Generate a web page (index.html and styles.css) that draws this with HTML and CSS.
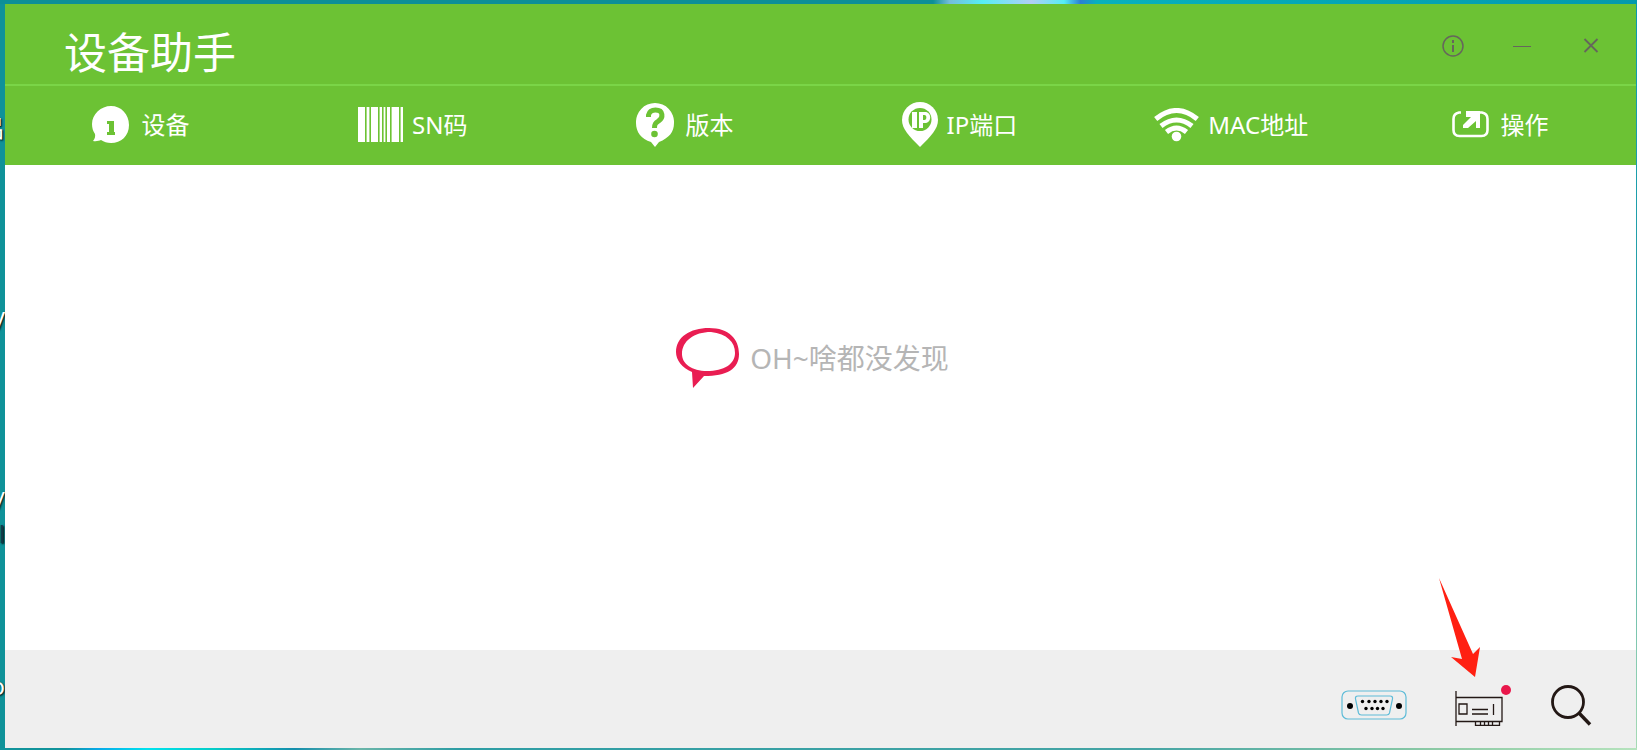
FILE: index.html
```
<!DOCTYPE html>
<html lang="zh-CN">
<head>
<meta charset="utf-8">
<title>设备助手</title>
<link rel="stylesheet" href="styles.css">
</head>
<body>
<div class="desktop">
  <div class="desk-labels" aria-hidden="true">
    <span class="desk-label label-a">吕</span>
    <span class="desk-label label-b">y</span>
    <span class="desk-label label-c">/</span>
    <span class="desk-label label-d">l</span>
    <span class="desk-label label-e">o</span>
  </div>
  <main class="window">
    <header class="titlebar">
      <h1 class="title">设备助手</h1>
      <div class="controls">
        <button class="control" aria-label="关于"><svg width="22" height="22" viewBox="0 0 22 22" fill="none" stroke="#66665c" stroke-width="1.5"><circle cx="11" cy="11" r="10"/><path d="M11 5v3M11 10v7" stroke-width="2"/></svg></button>
        <button class="control" aria-label="最小化"><svg width="22" height="22" viewBox="0 0 22 22"><path d="M2 11h18v1H2z" fill="#66665c"/></svg></button>
        <button class="control" aria-label="关闭"><svg width="22" height="22" viewBox="0 0 22 22"><path d="M4.500 4l13 13M17.500 4l-13 13" stroke="#66665c" stroke-width="1.800"/></svg></button>
      </div>
    </header>
    <div class="columns">
      <div class="column wide"><svg width="37" height="38" viewBox="0 0 37 38"><path fill="#fff" d="M19 0C29 0 37 8 37 19S29 37 19 37c-4 0-7-1-10-3-2 1-5 1.500-8 1 2-2 2.500-5 2-7C1 25 0 22 0 18 0 8 9 0 19 0z"/><path fill="#6cc234" d="M15 15h7v11h1v3h-8v-3h2v-8h-2z"/></svg><span>设备</span></div>
      <div class="column narrow"><svg width="45" height="35" viewBox="0 0 45 35"><path fill="#fff" d="M0 0h45v35H0z"/><path stroke="#6cc234" stroke-width="1" d="M7.500 0v35M12.500 0v35M20.500 0v35M24.500 0v35M28.500 0v35M32.500 0v35M41.500 0v35"/><path stroke="#a6da83" stroke-width="1" d="M8.500 0v35M11.500 0v35M21.500 0v35M25.500 0v35M27.500 0v35M33.500 0v35M42.500 0v35"/></svg><span>SN码</span></div>
      <div class="column wide"><svg width="38" height="44" viewBox="0 0 38 44"><path fill="#fff" d="M19 0a19 19 0 0 1 19 20c0 9-5 15-15 19l-4 5-4-5C5 36 0 29 0 20A19 19 0 0 1 19 0z"/><path d="M12.500 14V12c1-4 4-5 7-5 8 0 8 8 3 11-3 2-4 3-4 7" fill="none" stroke="#6cc234" stroke-width="5"/><circle cx="18.500" cy="31" r="3.300" fill="#6cc234"/></svg><span>版本</span></div>
      <div class="column narrow late"><svg width="36" height="45" viewBox="0 0 36 45"><path fill="#fff" d="M18 0a18 18 0 0 1 18 18c0 9-7 16-18 27C7 34 0 27 0 18A18 18 0 0 1 18 0z"/><circle cx="18" cy="17.500" r="11.500" fill="#6cc234"/><path fill="#fff" fill-rule="evenodd" d="M10 10h5v16h-5zM17 10h6c7 0 7 11 0 11h-2v5h-4zM21 13v5h1.500c2.500 0 2.500-5 0-5z"/></svg><span>IP端口</span></div>
      <div class="column narrow late"><svg width="45" height="34" viewBox="0 0 45 34" fill="none" stroke="#fff" stroke-width="5"><path d="M1.700 11q21-17 41.600 0M7 18q15.500-12 31 0M12.500 24q10-8 20 0"/><circle cx="22.500" cy="28.500" r="4.800" fill="#fff" stroke="none"/></svg><span>MAC地址</span></div>
      <div class="column wide"><svg width="37" height="27" viewBox="0 0 37 27" fill="none" stroke="#fff" stroke-width="2.600"><path d="M9 1.500H7Q1.500 2.500 1.500 8v11q0 6 6 6h22q6 0 6-6V8q0-5.500-5.500-6.500H28"/><path d="M14 0h14v17h-4V10l-8 7h-5v-3l8-8h-5z" fill="#fff" stroke="none"/></svg><span>操作</span></div>
    </div>
    <section class="content">
      <svg width="64" height="60" viewBox="0 0 64 60"><path fill="#e91d52" fill-rule="evenodd" d="M33 0C53 0 63 11 63 26 63 41 51 48 28 48L17 60 16 44C6 40 0 32 0 24 0 9 14 0 33 0zM35 4C18 4 6 13 6 26c0 10 10 17 25 17 17 0 28-7 28-18C59 14 51 6 35 4z"/></svg>
      <p class="empty">OH~啥都没发现</p>
    </section>
    <footer class="toolbar">
      <button class="tool" aria-label="串口"><svg width="66" height="30" viewBox="0 0 66 30" fill="none" stroke="#5ebcd8" stroke-width="1.200"><rect x="1" y="1" width="64" height="28" rx="6"/><path d="M17 6h32q3 0 2.500 3l-3 14q-.5 2-3 2h-25q-2.500 0-3-2l-3-14q-.5-3 2.500-3z"/><g fill="#000" stroke="none"><circle cx="9" cy="16" r="3"/><circle cx="58" cy="16" r="3"/><circle cx="21.500" cy="11.500" r="1.700"/><circle cx="28" cy="11.500" r="1.700"/><circle cx="34" cy="11.500" r="1.700"/><circle cx="40" cy="11.500" r="1.700"/><circle cx="46" cy="11.500" r="1.700"/><circle cx="25" cy="18.500" r="1.700"/><circle cx="31" cy="18.500" r="1.700"/><circle cx="36.500" cy="18.500" r="1.700"/><circle cx="42" cy="18.500" r="1.700"/></g></svg></button>
      <button class="tool card" aria-label="网卡"><svg width="48" height="35" viewBox="0 0 48 35" fill="none" stroke="#231815" stroke-width="1.300"><path d="M1 0v35M1 6.500h46v24H1M4 13h8v10H4zM17 18.500h16M17 23h16M38.500 13v11M20.500 30.500v4h24v-4M25.500 30v4M29.500 30v4M33.500 30v4M37.500 30v4"/></svg><i class="badge"></i>
        <svg class="pointer" width="42" height="100" viewBox="0 0 42 100"><path fill="#ff2012" d="M0 0L34 76 41 69 36 99 12 79 23 81z"/></svg></button>
      <button class="tool" aria-label="搜索"><svg width="41" height="41" viewBox="0 0 41 41" fill="none" stroke="#231815"><circle cx="17" cy="17" r="15.500" stroke-width="2.800"/><path d="M28 28l11 11.500" stroke-width="3.400"/></svg></button>
    </footer>
  </main>
</div>
</body>
</html>
```
FILE: styles.css
```
* { box-sizing: border-box; }
body {
  margin: 0;
  font-family: "Noto Sans", "Noto Sans CJK SC", sans-serif;
}
svg { display: block; flex: none; }
button { border: 0; padding: 0; background: none; }
.desktop {
  position: relative;
  display: flex;
  min-height: 100vh;
  padding: 4px 1px 2px 5px;
  background:
    linear-gradient(90deg, #11939b 0 4%, #08a9e8 6%, #00e2ee 9%, #05cdc8 13%, #158eac 18%, #6ab5a9 22%, #2d9da4 28%, #45a5a5 70%, #8dcaa5 88%, #b5e3bd) bottom / 100% 2px no-repeat,
    linear-gradient(90deg, #0c8f97 0 57%, #74bdd9 58%, #55eef4 60%, #b1cef5 63%, #55eef4 65%, #2b7fd4 66%, #06b1bd 67%, #0399ad) top / 100% 4px no-repeat,
    linear-gradient(#0799b0, #3aa6a6 60%, #a7dbb5) right / 1px 100% no-repeat,
    #0f9299;
}
.desk-labels {
  position: absolute;
  inset: 0 auto 0 0;
  width: 5px;
  overflow: hidden;
}
.desk-label {
  position: absolute;
  right: 0;
  color: #fff;
  font-size: 24px;
  line-height: 32px;
  text-shadow: 1px 1px 2px #000;
}
.label-a { top: 112px; }
.label-b { top: 300px; }
.label-c { top: 484px; }
.label-d { top: 518px; color: #123c50; }
.label-e { top: 670px; }
.window {
  position: relative;
  flex: 1;
  display: flex;
  flex-direction: column;
  background: #fff;
}
.titlebar {
  display: flex;
  justify-content: space-between;
  height: 82px;
  padding: 0 34px 0 59px;
  border-bottom: 2px solid #7ad547;
  background: #6cc234;
}
.title {
  margin: 0;
  padding-top: 18px;
  color: #fff;
  font-size: 43px;
  font-weight: 400;
  line-height: 62px;
}
.controls { display: flex; gap: 47px; padding-top: 31px; align-items: flex-start; }
.columns {
  display: grid;
  grid-template-columns: repeat(6, 1fr);
  height: 79px;
  padding-bottom: 2px;
  background: #6cc234;
  color: #fff;
  font-size: 24px;
  line-height: 36px;
}
.column { display: flex; align-items: center; justify-content: center; }
.wide { gap: 12px; }
.narrow { gap: 9px; }
.late { padding-left: 6px; }
.content {
  flex: 1;
  display: flex;
  justify-content: center;
  align-items: flex-start;
  gap: 10px;
  padding: 163px 16px 0 0;
}
.empty {
  margin: 0;
  padding-top: 10px;
  color: #b5b5b5;
  font-size: 28px;
  line-height: 40px;
}
.toolbar {
  display: flex;
  justify-content: flex-end;
  align-items: center;
  gap: 48px;
  height: 98px;
  padding: 12px 44px 0 0;
  background: #efefef;
}
.card { position: relative; margin-top: 6px; }
.badge {
  position: absolute;
  top: -6px;
  right: -8px;
  width: 10px;
  height: 10px;
  border-radius: 50%;
  background: #e9174b;
}
.pointer {
  position: absolute;
  right: 22px;
  bottom: 48px;
  pointer-events: none;
}
```
